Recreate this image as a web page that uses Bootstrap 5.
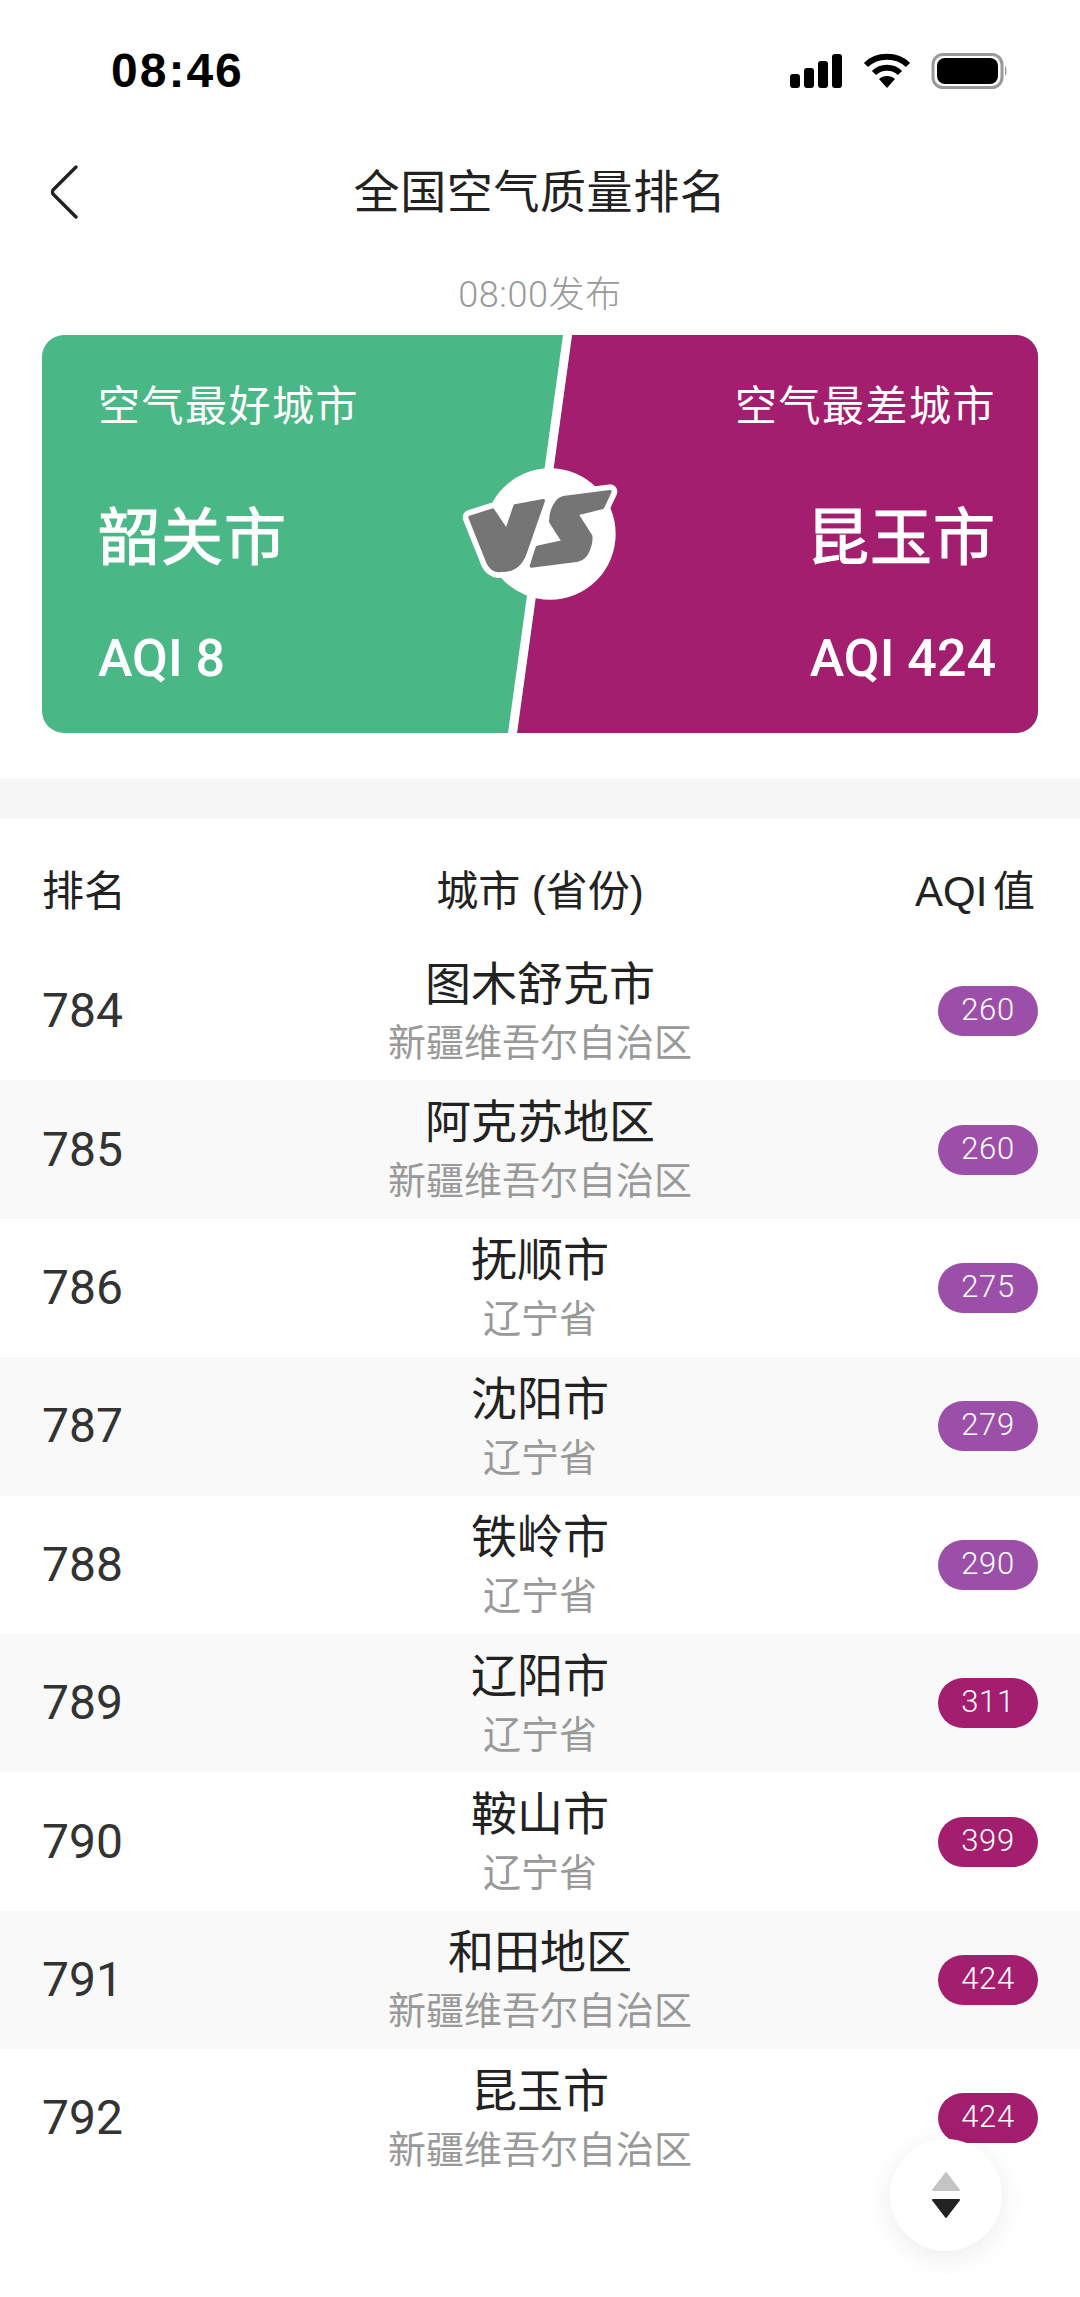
<!DOCTYPE html>
<html lang="zh-CN">
<head>
  <meta charset="UTF-8" />
  <meta name="viewport" content="width=device-width, initial-scale=1"/>
  <title>全国空气质量排名</title>
  <link href="https://cdn.jsdelivr.net/npm/bootstrap@5.3.0/dist/css/bootstrap.min.css" rel="stylesheet"/>
  <style>
    body { width: 1080px; height: 2297px; overflow: hidden; background: #fff; color: #222; font-family: "Liberation Sans", "Noto Sans CJK SC", sans-serif; }
    .status-bar { height: 130px; padding: 0 73px 0 111px; }
    .status-time { font-size: 48px; font-weight: 700; letter-spacing: 2px; color: #000; line-height: 1; margin-top: 12px; }
    .status-icons { margin-top: 12px; }
    .title-bar { height: 124px; padding-left: 50px; }
    .back-btn { width: 28px; height: 54px; }
    .page-title { font-size: 46px; line-height: 60px; letter-spacing: .6px; }
    .publish-time { font-family: Roboto, "Noto Sans CJK SC", sans-serif; font-weight: 300; font-size: 36px; line-height: 40px; letter-spacing: .6px; color: #999; height: 60px; padding-top: 21px; box-sizing: content-box; }
    .vs-card { height: 398px; margin: 0 42px; background: #4ab786; border-radius: 22px; color: #fff; }
    .vs-art { position: absolute; left: 0; top: 0; width: 996px; height: 398px; }
    .vs-side { position: relative; z-index: 1; width: 50%; padding: 42px 42px 0 56px; }
    .vs-label { font-size: 42px; line-height: 60px; letter-spacing: 1.5px; }
    .vs-city { font-family: "Noto Sans CJK SC", sans-serif; font-size: 62px; line-height: 80px; letter-spacing: 1px; -webkit-text-stroke: 1.2px #fff; margin-top: 56px; }
    .vs-aqi { font-family: Roboto, sans-serif; font-size: 52px; line-height: 60px; font-weight: 500; margin-top: 56px; }
    .band { height: 41px; margin-top: 45px; background: #f7f7f7; }
    .rank-head { height: 123px; padding: 22px 42px 0; font-size: 42px; line-height: 60px; }
    .head-aqi { word-spacing: -6px; padding-right: 3px; }
    .rank-row { height: 138.4px; padding: 0 42px; }
    .rank-row:nth-child(even) { background: #f9f9f9; }
    .rank-num { font-family: Roboto, sans-serif; font-size: 48px; color: #333; }
    .city-name { font-size: 46px; line-height: 58px; }
    .city-prov { font-size: 38px; line-height: 50px; margin-top: 5px; color: #999; }
    .aqi-pill { display: inline-block; width: 100px; height: 50px; border-radius: 25px; color: #fff; font-family: Roboto, sans-serif; font-weight: 300; font-size: 31px; letter-spacing: .6px; line-height: 48px; text-align: center; }
    .aqi-purple { background: #9c4fa9; }
    .aqi-maroon { background: #a31e6e; }
    .sort-btn { position: absolute; left: 890px; top: 2139px; width: 112px; height: 112px; background: #fff; border-radius: 50%; box-shadow: 0 6px 28px rgba(0,0,0,.08); }
  </style>
</head>
<body class="position-relative">
  <div class="status-bar d-flex justify-content-between align-items-center">
    <div class="status-time">08:46</div>
    <svg class="status-icons" width="218" height="38" viewBox="0 0 218 38">
      <g fill="#000">
        <rect x="1" y="22" width="10" height="14" rx="3"/>
        <rect x="15" y="16" width="10" height="20" rx="3"/>
        <rect x="29" y="9" width="10" height="27" rx="3"/>
        <rect x="43" y="2" width="10" height="34" rx="3"/>
      </g>
      <g fill="none" stroke="#000" stroke-width="6">
        <path d="M77 13 C88 2 108 2 119 13"/>
        <path d="M85 21 C92 14 104 14 111 21"/>
      </g>
      <path d="M90 27 C94 23 102 23 106 27 L98 36 Z" fill="#000"/>
      <rect x="144" y="2.5" width="69" height="33" rx="10" fill="none" stroke="#999" stroke-width="3"/>
      <rect x="148" y="6" width="61" height="26" rx="8" fill="#000"/>
      <path d="M216 14 C218 15 218 23 216 24 Z" fill="#999"/>
    </svg>
  </div>

  <div class="title-bar position-relative d-flex align-items-center">
    <svg class="back-btn" viewBox="0 0 28 54"><path d="M26 2 L3 25 Q2 27 3 29 L26 52" fill="none" stroke="#222" stroke-width="3.4" stroke-linecap="round" stroke-linejoin="round"/></svg>
    <div class="page-title position-absolute start-0 end-0 text-center">全国空气质量排名</div>
  </div>

  <div class="publish-time text-center">08:00发布</div>

  <div class="vs-card position-relative overflow-hidden d-flex justify-content-between">
    <svg class="vs-art" viewBox="0 0 996 398">
      <polygon points="530,0 996,0 996,398 475,398" fill="#a31e6e"/>
      <polygon points="521,0 530,0 475,398 466,398" fill="#fff"/>
      <g transform="translate(358 -15) scale(.33333)">
        <circle cx="450" cy="642" r="197" fill="#fff"/>
        <g fill="#fff" stroke="#fff" stroke-width="44" stroke-linejoin="round">
          <path d="M210 592 L278 570 L320 632 L345 558 L430 542 L375 700 Q358 745 320 750 L295 752 Q275 750 265 730 Z"/>
          <path d="M630 515 L608 562 L530 582 L572 648 Q575 665 565 690 Q555 715 535 720 L394 738 L412 682 L490 665 L452 605 Q452 570 470 548 Q478 535 495 532 Z"/>
        </g>
        <g fill="#757575" stroke="#757575" stroke-width="10" stroke-linejoin="round">
          <path d="M210 592 L278 570 L320 632 L345 558 L430 542 L375 700 Q358 745 320 750 L295 752 Q275 750 265 730 Z"/>
          <path d="M630 515 L608 562 L530 582 L572 648 Q575 665 565 690 Q555 715 535 720 L394 738 L412 682 L490 665 L452 605 Q452 570 470 548 Q478 535 495 532 Z"/>
        </g>
      </g>
    </svg>
    <div class="vs-side">
      <div class="vs-label">空气最好城市</div>
      <div class="vs-city">韶关市</div>
      <div class="vs-aqi">AQI 8</div>
    </div>
    <div class="vs-side text-end">
      <div class="vs-label">空气最差城市</div>
      <div class="vs-city">昆玉市</div>
      <div class="vs-aqi">AQI 424</div>
    </div>
  </div>

  <div class="band"></div>

  <div class="rank-head row g-0 align-items-center">
    <div class="col-3">排名</div>
    <div class="col-6 text-center">城市 (省份)</div>
    <div class="col-3 text-end head-aqi">AQI 值</div>
  </div>

  <div id="rankList"></div>

  <div class="sort-btn d-flex align-items-center justify-content-center">
    <svg width="28" height="48" viewBox="0 0 28 48">
      <path d="M14 2 L27 19 H1 Z" fill="#c4c4c4" stroke="#c4c4c4" stroke-width="2" stroke-linejoin="round"/>
      <path d="M1 29 H27 L14 46 Z" fill="#222" stroke="#222" stroke-width="2" stroke-linejoin="round"/>
    </svg>
  </div>

  <script src="https://cdn.jsdelivr.net/npm/bootstrap@5.3.0/dist/js/bootstrap.bundle.min.js"></script>
  <script>
    const XJ = '新疆维吾尔自治区', LN = '辽宁省';
    const rows = [
      [784, '图木舒克市', XJ, 260], [785, '阿克苏地区', XJ, 260], [786, '抚顺市', LN, 275],
      [787, '沈阳市', LN, 279], [788, '铁岭市', LN, 290], [789, '辽阳市', LN, 311],
      [790, '鞍山市', LN, 399], [791, '和田地区', XJ, 424], [792, '昆玉市', XJ, 424]
    ];
    document.getElementById('rankList').innerHTML = rows.map(([rank, city, prov, aqi]) => `
      <div class="rank-row row g-0 align-items-center">
        <div class="col-3 rank-num">${rank}</div>
        <div class="col-6 text-center">
          <div class="city-name">${city}</div>
          <div class="city-prov">${prov}</div>
        </div>
        <div class="col-3 text-end"><span class="aqi-pill ${aqi > 300 ? 'aqi-maroon' : 'aqi-purple'}">${aqi}</span></div>
      </div>`).join('');
  </script>
</body>
</html>
